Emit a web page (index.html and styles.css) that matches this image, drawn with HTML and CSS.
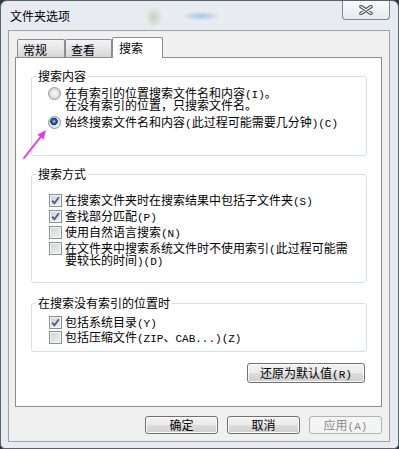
FILE: index.html
```html
<!DOCTYPE html>
<html lang="zh-CN">
<head>
  <meta charset="UTF-8" />
  <title>文件夹选项</title>
  <link rel="stylesheet" href="styles.css">
</head>
<body>
  <div class="window">
    <div class="titlebar">
      <span class="title">文件夹选项</span>
      <button class="close">
        <svg width="14" height="10" viewBox="0 0 14 10">
          <path d="M2 1.5 L12 8.5 M12 1.5 L2 8.5" stroke="#50565c" stroke-width="3.6" stroke-linecap="round" fill="none"/>
          <path d="M2 1.5 L12 8.5 M12 1.5 L2 8.5" stroke="#f4f6f8" stroke-width="1.4" stroke-linecap="round" fill="none"/>
        </svg>
      </button>
    </div>

    <div class="client">
      <div class="tabs">
        <div class="tab">常规</div>
        <div class="tab">查看</div>
        <div class="tab active">搜索</div>
      </div>

      <div class="panel">
        <fieldset class="group g1">
          <legend>搜索内容</legend>
          <div class="row">
            <span class="radio"></span>
            <span class="label">在有索引的位置搜索文件名和内容<span class="k">(I)</span>。<br>在没有索引的位置，只搜索文件名。</span>
          </div>
          <div class="row">
            <span class="radio on"></span>
            <span class="label">始终搜索文件名和内容<span class="k">(</span>此过程可能需要几分钟<span class="k">)(C)</span></span>
          </div>
        </fieldset>

        <fieldset class="group g2">
          <legend>搜索方式</legend>
          <div class="row chk">
            <span class="check on"><svg viewBox="0 0 11 11"><path d="M2.2 5.6 L4.4 8.3 L8.9 2.2" /></svg></span>
            <span class="label">在搜索文件夹时在搜索结果中包括子文件夹<span class="k">(S)</span></span>
          </div>
          <div class="row chk">
            <span class="check on"><svg viewBox="0 0 11 11"><path d="M2.2 5.6 L4.4 8.3 L8.9 2.2" /></svg></span>
            <span class="label">查找部分匹配<span class="k">(P)</span></span>
          </div>
          <div class="row chk">
            <span class="check"></span>
            <span class="label">使用自然语言搜索<span class="k">(N)</span></span>
          </div>
          <div class="row chk">
            <span class="check"></span>
            <span class="label">在文件夹中搜索系统文件时不使用索引<span class="k">(</span>此过程可能需<br>要较长的时间<span class="k">)(D)</span></span>
          </div>
        </fieldset>

        <fieldset class="group g3">
          <legend>在搜索没有索引的位置时</legend>
          <div class="row chk">
            <span class="check on"><svg viewBox="0 0 11 11"><path d="M2.2 5.6 L4.4 8.3 L8.9 2.2" /></svg></span>
            <span class="label">包括系统目录<span class="k">(Y)</span></span>
          </div>
          <div class="row chk">
            <span class="check"></span>
            <span class="label">包括压缩文件<span class="k">(ZIP</span>、<span class="k">CAB...)(Z)</span></span>
          </div>
        </fieldset>

        <div class="reset-row">
          <button class="btn reset">还原为默认值<span class="k">(R)</span></button>
        </div>
      </div>

      <div class="actions">
        <button class="btn">确定</button>
        <button class="btn">取消</button>
        <button class="btn" disabled>应用<span class="k">(A)</span></button>
      </div>
    </div>

    <!-- pointer drawn over the dialog -->
    <svg class="arrow" width="32" height="38" viewBox="0 0 32 38">
      <path d="M4 33 L21 11.5" stroke="#e23ce4" stroke-width="2" stroke-linecap="round" fill="none"/>
      <path d="M26 5 L23.6 14.6 L17.4 9.8 Z" fill="#e23ce4"/>
    </svg>
  </div>
</body>
</html>
```

FILE: styles.css
```css
* {
  box-sizing: border-box;
  margin: 0;
  padding: 0;
}

body {
  background: #2e3b45;
  font-family: "Noto Sans CJK SC", sans-serif;
  font-size: 12px;
  color: #000;
}

.window {
  position: relative;
  width: 399px;
  height: 449px;
  display: flex;
  flex-direction: column;
  padding: 0 8px 6px 7px;
  border: 1px solid #56626c;
  border-radius: 7px 7px 5px 5px;
  background: #e8ecf0;
}

.titlebar {
  height: 29px;
  display: flex;
  align-items: flex-start;
  background:
    radial-gradient(ellipse 9px 11px at 146px 16px, rgba(150, 180, 120, 0.45), transparent),
    radial-gradient(ellipse 20px 5px at 193px 15px, rgba(90, 150, 225, 0.45), transparent);
}

.title {
  margin: 9px 0 0 2px;
  line-height: 12px;
}

.close {
  margin-left: auto;
  width: 48px;
  height: 19px;
  display: flex;
  align-items: center;
  justify-content: center;
  border: 1px solid #7d868f;
  border-top: none;
  border-radius: 0 0 4px 4px;
  background: linear-gradient(#fbfcfd, #e6eaee);
}

.close svg {
  display: block;
}

.client {
  flex: 1;
  display: flex;
  flex-direction: column;
  padding: 6px 7px 7px 6px;
  border: 1px solid #9ca4ab;
  background: #f0f0f0;
}

.tabs {
  height: 20px;
  display: flex;
  align-items: flex-end;
  padding-left: 2px;
}

.tab {
  width: 48px;
  height: 18px;
  padding: 4px 0 0 5px;
  line-height: 12px;
  border: 1px solid #898c95;
  border-bottom: none;
  border-radius: 2px 2px 0 0;
  background: linear-gradient(#f4f4f4, #e6e6e6 50%, #d6d6d6);
}

.tab + .tab {
  width: 47px;
}

.tab.active {
  position: relative;
  z-index: 1;
  width: 51px;
  height: 21px;
  margin-bottom: -1px;
  padding: 4px 0 0 6px;
  background: #fff;
}

.panel {
  height: 350px;
  display: flex;
  flex-direction: column;
  padding: 11px 14px 0 15px;
  border: 1px solid #898c95;
  background: #fff;
}

.group {
  border: 1px solid #d5dfe5;
  border-radius: 3px;
  padding: 0;
  min-width: 0;
}

.group legend {
  margin-left: 4px;
  padding: 0 2px;
  line-height: 14px;
}

.row {
  display: flex;
  align-items: flex-start;
  padding-left: 16px;
  line-height: 12px;
}

.row.chk {
  padding-left: 17px;
}

.label {
  margin-left: 4px;
  white-space: nowrap;
  line-height: 12px;
}

.chk .label {
  margin-left: 3px;
}

.k {
  font-family: "Liberation Mono", monospace;
  font-size: 11px;
  line-height: 0;
}

.g1 {
  padding: 4px 0 27px;
}

.g1 .row + .row {
  margin-top: 5px;
}

.g2 {
  margin-top: 11px;
  padding: 13px 0 16px;
}

.g2 .row + .row {
  margin-top: 4px;
}

.g3 {
  margin-top: 13px;
  padding: 6px 0 8px;
}

.g3 .row + .row {
  margin-top: 3px;
}

.radio {
  flex: none;
  width: 13px;
  height: 13px;
  margin-bottom: -1px;
  border-radius: 50%;
  border: 1px solid #989898;
  background: radial-gradient(circle at 50% 50%, #f6f6f6 0, #ececec 3px, #d4d4d4 5px, #e9e9e9 6px);
}

.radio.on {
  border-color: #8a8f96;
  background: radial-gradient(circle at 45% 40%, #a8d8fb 0, #3b7cc0 1.5px, #0e2f5c 3.4px, #d6d8da 4px, #eeeeee 6px);
}

.check {
  flex: none;
  width: 13px;
  height: 13px;
  margin-bottom: -1px;
  border: 1px solid #8e8f8f;
  box-shadow: inset 0 0 0 1px #f4f4f4;
  background: linear-gradient(135deg, #cdd0d4, #f2f2f2);
}

.check svg {
  display: block;
  width: 11px;
  height: 11px;
}

.check path {
  fill: none;
  stroke: #4d5d80;
  stroke-width: 1.8;
}

.reset-row {
  display: flex;
  justify-content: flex-end;
  margin-top: 11px;
  padding-right: 2px;
}

.btn {
  width: 73px;
  height: 18px;
  font-family: "Noto Sans CJK SC", sans-serif;
  font-size: 12px;
  line-height: 12px;
  color: #000;
  border: 1px solid #707070;
  border-radius: 3px;
  box-shadow: inset 0 0 0 1px #fbfbfb;
  background: linear-gradient(#f2f2f2 0, #ebebeb 50%, #dddddd 50%, #cfcfcf 100%);
}

.btn.reset {
  width: 118px;
  height: 20px;
}

.btn:disabled {
  color: #8a8a8a;
  border-color: #adb2b5;
  box-shadow: none;
  background: #f4f4f4;
}

.actions {
  display: flex;
  justify-content: flex-end;
  gap: 9px;
  margin-top: 9px;
}

.arrow {
  position: absolute;
  left: 19px;
  top: 124px;
  pointer-events: none;
}
```
